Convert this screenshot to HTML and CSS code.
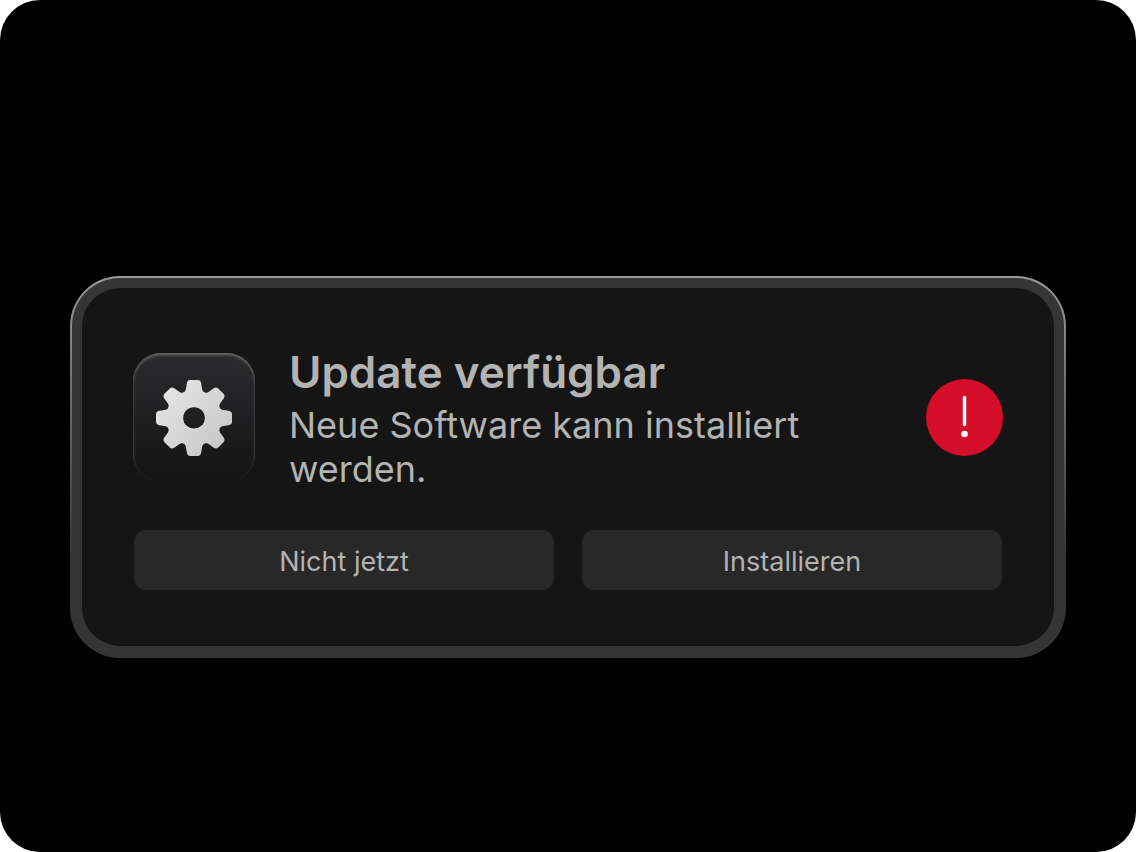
FILE: index.html
```html
<!DOCTYPE html>
<html lang="de">
<head>
    <meta charset="UTF-8">
    <meta name="viewport" content="width=device-width, initial-scale=1.0">
    <title>Update verfügbar</title>
    <link rel="stylesheet" href="styles.css">
</head>
<body>
    <main class="screen">
        <section class="frame" role="alertdialog" aria-labelledby="title" aria-describedby="message">
            <div class="bezel">
                <div class="card">
                    <div class="info">
                        <div class="app-icon">
                            <svg class="gear" viewBox="-40 -40 80 80" aria-hidden="true">
                                <defs>
                                    <linearGradient id="metal" x1="0" y1="0" x2="1" y2="1">
                                        <stop offset="0.1" stop-color="#e6e6e6"/>
                                        <stop offset="0.5" stop-color="#d6d6d6"/>
                                        <stop offset="0.9" stop-color="#c6c6c6"/>
                                    </linearGradient>
                                    <path id="tooth" d="M-10.6-25.6C-9-26.4-8.3-27.6-8-29.6L-7.2-34.6Q-6.6-38-3.8-38H3.8Q6.6-38 7.2-34.6L8-29.6C8.3-27.6 9-26.4 10.6-25.6L8-18H-8Z"/>
                                    <mask id="gear-shape" maskUnits="userSpaceOnUse" x="-40" y="-40" width="80" height="80">
                                        <g fill="#fff">
                                            <circle r="27.6"/>
                                            <use href="#tooth"/>
                                            <use href="#tooth" transform="rotate(45)"/>
                                            <use href="#tooth" transform="rotate(90)"/>
                                            <use href="#tooth" transform="rotate(135)"/>
                                            <use href="#tooth" transform="rotate(180)"/>
                                            <use href="#tooth" transform="rotate(225)"/>
                                            <use href="#tooth" transform="rotate(270)"/>
                                            <use href="#tooth" transform="rotate(315)"/>
                                        </g>
                                        <circle r="10.8" fill="#000"/>
                                    </mask>
                                </defs>
                                <rect x="-40" y="-40" width="80" height="80" fill="url(#metal)" mask="url(#gear-shape)"/>
                                <path d="M-8 7.8A11.2 11.2 0 0 0 8 7.8" fill="none" stroke="#f0f0f0" stroke-width="0.8"/>
                            </svg>
                        </div>
                        <div class="text">
                            <h1 class="title" id="title">Update verfügbar</h1>
                            <p class="message" id="message">Neue Software kann installiert werden.</p>
                        </div>
                        <svg class="alert" viewBox="0 0 77 77" role="img" aria-label="Wichtig">
                            <circle cx="38.5" cy="38.5" r="38.5" fill="#d40d29"/>
                            <path d="M38.5 18.5V45.5" stroke="#fff" stroke-width="3.4" stroke-linecap="round"/>
                            <circle cx="38.5" cy="55" r="3.3" fill="#fff"/>
                        </svg>
                    </div>
                    <div class="actions">
                        <button type="button">Nicht jetzt</button>
                        <button type="button">Installieren</button>
                    </div>
                </div>
            </div>
        </section>
    </main>
</body>
</html>
```
FILE: styles.css
```css
* {
    box-sizing: border-box;
}

body {
    margin: 0;
    background: white;
    font-family: Inter, "Liberation Sans", sans-serif;
    color: #b3b3b3;
}

.screen {
    display: flex;
    align-items: center;
    min-height: 100vh;
    padding: 82px 70px 0;
    background: black;
    border-radius: 40px;
}

/* the light rim fades out towards the bottom */
.frame {
    flex: 1;
    padding: 2px;
    border-radius: 50px;
    background: linear-gradient(#999, #353535 72%);
    box-shadow: 0 16px 60px #020203;
}

.bezel {
    padding: 10px;
    border-radius: 48px;
    background: #353535;
}

.card {
    padding: 56px 52px;
    border-radius: 38px;
    background: #151515;
}

.info {
    display: flex;
    align-items: center;
    margin: 0 -1px 39px;
}

.app-icon {
    display: flex;
    align-items: center;
    justify-content: center;
    flex: none;
    width: 122px;
    height: 129px;
    border-radius: 28px;
    background: linear-gradient(#2b2b2d, #1f1f21 50%, #151515 92%);
    box-shadow: inset 0 2px 3px #6a6a6b;
}

.gear {
    width: 80px;
    height: 80px;
}

.text {
    flex: 1;
    margin: 0 34px;
}

.title {
    margin: 0 0 3px;
    font-size: 44px;
    line-height: 56px;
    font-weight: 600;
}

.message {
    margin: 0;
    font-size: 36px;
    line-height: 44px;
}

.alert {
    flex: none;
    width: 77px;
    height: 77px;
}

.actions {
    display: grid;
    grid-template-columns: 1fr 1fr;
    gap: 28px;
}

button {
    height: 60px;
    padding: 2px 6px 0;
    border: none;
    border-radius: 12px;
    background: #282828;
    color: #b3b3b3;
    font-family: inherit;
    font-size: 27px;
    cursor: pointer;
}

button:hover {
    background: #303030;
}
```
